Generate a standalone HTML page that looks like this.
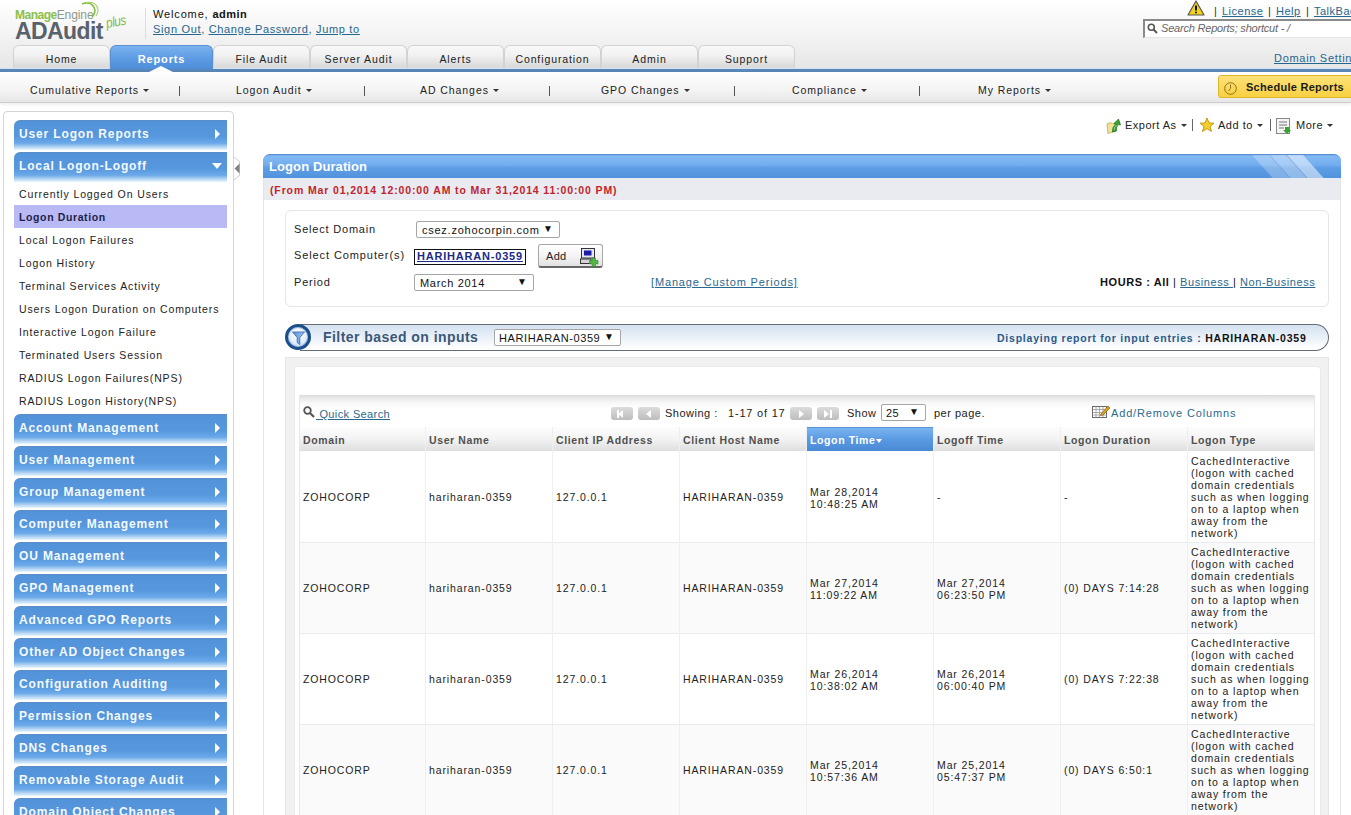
<!DOCTYPE html>
<html><head><meta charset="utf-8">
<style>
*{box-sizing:border-box;margin:0;padding:0}
html,body{width:1351px;height:815px;overflow:hidden;background:#fff;font-family:"Liberation Sans",sans-serif;color:#222;font-size:12px}
.a{position:absolute;white-space:nowrap}
#hdr{position:absolute;left:0;top:0;width:1351px;height:69px;background:linear-gradient(#ffffff 0%,#f6f6f6 40%,#e6e6e6 100%)}
.tab{position:absolute;top:45px;height:25px;border:1px solid #d2d2d2;border-bottom:none;border-radius:6px 6px 0 0;background:linear-gradient(#f9f9f9,#f1f1f1 40%,#dbdbdb 85%,#e0e0e0);text-align:center;font-size:10.5px;line-height:26px;color:#222;letter-spacing:0.9px}
.tab.on{background:linear-gradient(#7cb2f0,#5d9be4 50%,#4b8ad6);border-color:#5a8fd2;color:#fff;font-weight:bold;height:26px;font-size:11px;letter-spacing:0.85px}
#bline{position:absolute;left:0;top:69px;width:1351px;height:3px;background:#5a88b9;border-top:none}
#sub{position:absolute;left:0;top:72px;width:1351px;height:31px;background:linear-gradient(#fefefe,#f4f4f4 60%,#e6e6e6);border-bottom:1px solid #cdcdcd;box-shadow:0 1px 4px rgba(0,0,0,0.10)}
.sn{position:absolute;top:84px;font-size:10.5px;color:#222;letter-spacing:0.93px}
.sep{position:absolute;top:86px;width:1px;height:10px;background:#555}
.car{display:inline-block;width:0;height:0;border-left:3px solid transparent;border-right:3px solid transparent;border-top:3px solid #333;vertical-align:middle;margin-left:4px;margin-bottom:2px}
#side{position:absolute;left:3px;top:111px;width:231px;height:720px;border:1px solid #d6d6d6;border-radius:4px;background:#fff}
.bar{position:absolute;left:14px;width:213px;height:30px;border-radius:6px 0 0 0;background:linear-gradient(#5a8cc6 0px,#5393d9 2px,#5797dd 55%,#6aa8e8 77%,#eaf6fc 100%);color:#f4faff;font-weight:bold;font-size:12px;line-height:28px;padding-left:5px;letter-spacing:0.85px}
.bar i{position:absolute;right:7px;top:9px;width:0;height:0;border-top:5px solid transparent;border-bottom:5px solid transparent;border-left:5px solid #fff}
.bar i.dn{border-left:5px solid transparent;border-right:5px solid transparent;border-top:6px solid #fff;border-bottom:none;top:11px;right:5px}
.si{position:absolute;left:19px;font-size:10.5px;color:#222;letter-spacing:0.89px;margin-top:2px}
.tb{font-size:11px;color:#222;letter-spacing:0.5px;margin-top:1px}
.fl{font-size:11px;color:#222;letter-spacing:0.8px}
.sel{border:1px solid #a6a6a6;border-radius:2px;background:#fff}
.sel span{position:absolute;top:1px;font-size:11px;color:#111;white-space:nowrap;line-height:14px}
.sel b{position:absolute;right:6px;top:1px;font-size:10px;color:#111;font-weight:normal}
.pg{top:407px;width:22px;height:13px;border-radius:3px;background:linear-gradient(#dcdcdc,#bdbdbd)}
.pg i{position:absolute;top:3px;width:0;height:0;border-top:4px solid transparent;border-bottom:4px solid transparent;border-right:5px solid #fff}
.pg i.r{border-right:none;border-left:5px solid #fff}
.pg s{position:absolute;top:3px;width:2px;height:8px;background:#fff}
.tt{font-size:11px;color:#222;letter-spacing:0.5px}
.th{top:434px;font-size:10.5px;font-weight:bold;color:#505050;letter-spacing:0.62px}
.td{font-size:10.5px;color:#222;letter-spacing:0.88px;line-height:12px}
</style></head><body>
<div id="hdr"></div>
<!-- logo -->
<div class="a" style="left:15px;top:8px;font-size:12px;font-weight:bold;color:#8cc04a;letter-spacing:-0.5px">Manage<span style="font-weight:normal;color:#8f9a8c;letter-spacing:-0.1px">Engine</span></div>
<div class="a" style="left:78px;top:1px"><svg width="22" height="18" viewBox="0 0 22 18"><path d="M4 3 Q14 -1 17 9 Q17 13 14 16" fill="none" stroke="#8cc04a" stroke-width="1.6"/><path d="M8 1.5 Q19 0 20 9 Q20 12 18 15" fill="none" stroke="#a8d070" stroke-width="1.1"/></svg></div>
<div class="a" style="left:15px;top:18px;font-size:23px;font-weight:bold;color:#59626c;letter-spacing:-0.6px">ADAudit</div>
<div class="a" style="left:106px;top:15px;font-size:14px;font-style:italic;color:#7cbc48;letter-spacing:-0.6px;transform:rotate(-10deg) scaleX(0.85);transform-origin:0 50%">plus</div>
<div class="a" style="left:145px;top:8px;width:1px;height:31px;background:#ddd"></div>
<div class="a" style="left:153px;top:8px;font-size:11px;color:#111;letter-spacing:0.85px">Welcome, <b style="letter-spacing:0.5px">admin</b></div>
<div class="a" style="left:153px;top:23px;font-size:11px;color:#27668f;letter-spacing:0.67px"><u>Sign Out</u>, <u>Change Password</u>, <u>Jump to</u></div>

<div class="tab" style="left:13px;width:97px">Home</div>
<div class="tab on" style="left:110px;width:103px">Reports</div>
<div class="tab" style="left:213px;width:97px">File Audit</div>
<div class="tab" style="left:310px;width:97px">Server Audit</div>
<div class="tab" style="left:407px;width:97px">Alerts</div>
<div class="tab" style="left:504px;width:97px">Configuration</div>
<div class="tab" style="left:601px;width:97px">Admin</div>
<div class="tab" style="left:698px;width:97px">Support</div>

<!-- top right -->
<div class="a" style="left:1187px;top:0px"><svg width="18" height="16" viewBox="0 0 18 16"><path d="M9 1 L17 15 L1 15 Z" fill="#f3d21a" stroke="#555" stroke-width="1.2" stroke-linejoin="round"/><path d="M9 5.5V10.5" stroke="#111" stroke-width="2"/><circle cx="9" cy="12.6" r="1" fill="#111"/></svg></div>
<div class="a" style="left:1214px;top:5px;font-size:11px;color:#333">|</div>
<div class="a" style="left:1222px;top:5px;font-size:11px;color:#27668f;letter-spacing:0.5px"><u>License</u></div>
<div class="a" style="left:1268px;top:5px;font-size:11px;color:#333">|</div>
<div class="a" style="left:1276px;top:5px;font-size:11px;color:#27668f;letter-spacing:0.5px"><u>Help</u></div>
<div class="a" style="left:1306px;top:5px;font-size:11px;color:#333">|</div>
<div class="a" style="left:1314px;top:5px;font-size:11px;color:#27668f;letter-spacing:0.5px"><u>TalkBack</u></div>
<div class="a" style="left:1143px;top:19px;width:210px;height:19px;border:2px solid #8a8a8a;border-right:none;border-bottom:1px solid #e6e6e6;background:#fff"></div>
<div class="a" style="left:1147px;top:23px"><svg width="11" height="11" viewBox="0 0 11 11"><circle cx="4.3" cy="4.3" r="3" fill="none" stroke="#555" stroke-width="1.6"/><path d="M6.5 6.5L10 10" stroke="#555" stroke-width="2"/></svg></div>
<div class="a" style="left:1161px;top:22px;font-size:11px;font-style:italic;color:#666;letter-spacing:-0.2px">Search Reports; shortcut - /</div>
<div class="a" style="left:1274px;top:52px;font-size:11px;color:#27668f;letter-spacing:0.7px"><u>Domain Settings</u></div>

<div class="a" style="left:0;top:68px;width:110px;height:1px;background:#d2e2f2"></div><div class="a" style="left:213px;top:68px;width:1138px;height:1px;background:#d2e2f2"></div>
<div id="bline"></div>
<div class="a" style="left:149px;top:66px;width:0;height:0;border-left:12px solid transparent;border-right:12px solid transparent;border-bottom:6px solid #fff"></div>

<div id="sub"></div>
<div class="sn" style="left:30px">Cumulative Reports<span class="car"></span></div>
<div class="sep" style="left:179px"></div>
<div class="sn" style="left:236px">Logon Audit<span class="car"></span></div>
<div class="sep" style="left:364px"></div>
<div class="sn" style="left:420px">AD Changes<span class="car"></span></div>
<div class="sep" style="left:549px"></div>
<div class="sn" style="left:601px">GPO Changes<span class="car"></span></div>
<div class="sep" style="left:734px"></div>
<div class="sn" style="left:792px">Compliance<span class="car"></span></div>
<div class="sep" style="left:919px"></div>
<div class="sn" style="left:978px">My Reports<span class="car"></span></div>
<div class="a" style="left:1218px;top:75px;width:140px;height:23px;border:1px solid #e0b428;border-radius:3px;background:linear-gradient(#fde27a,#f8d040);"></div>
<div class="a" style="left:1224px;top:82px"><svg width="13" height="13" viewBox="0 0 13 13"><circle cx="6.5" cy="6.5" r="5.8" fill="none" stroke="#8a7020" stroke-width="1"/><path d="M6.5 2.5V6.5L4.5 9" fill="none" stroke="#8a7020" stroke-width="1"/></svg></div>
<div class="a" style="left:1246px;top:81px;font-size:11px;font-weight:bold;color:#1a1a1a;letter-spacing:0.28px">Schedule Reports</div>

<!-- sidebar -->
<div id="side"></div>
<div class="bar" style="top:120px">User Logon Reports<i></i></div>
<div class="bar" style="top:152px">Local Logon-Logoff<i class="dn"></i></div>
<div class="si" style="top:186px">Currently Logged On Users</div>
<div class="a" style="left:14px;top:205px;width:213px;height:23px;background:#b9b9f5"></div>
<div class="si" style="top:209px;font-weight:bold;color:#1c1f4a;letter-spacing:0.62px">Logon Duration</div>
<div class="si" style="top:232px">Local Logon Failures</div>
<div class="si" style="top:255px">Logon History</div>
<div class="si" style="top:278px">Terminal Services Activity</div>
<div class="si" style="top:301px">Users Logon Duration on Computers</div>
<div class="si" style="top:324px">Interactive Logon Failure</div>
<div class="si" style="top:347px">Terminated Users Session</div>
<div class="si" style="top:370px">RADIUS Logon Failures(NPS)</div>
<div class="si" style="top:393px">RADIUS Logon History(NPS)</div>
<div class="bar" style="top:414px">Account Management<i></i></div>
<div class="bar" style="top:446px">User Management<i></i></div>
<div class="bar" style="top:478px">Group Management<i></i></div>
<div class="bar" style="top:510px">Computer Management<i></i></div>
<div class="bar" style="top:542px">OU Management<i></i></div>
<div class="bar" style="top:574px">GPO Management<i></i></div>
<div class="bar" style="top:606px">Advanced GPO Reports<i></i></div>
<div class="bar" style="top:638px">Other AD Object Changes<i></i></div>
<div class="bar" style="top:670px">Configuration Auditing<i></i></div>
<div class="bar" style="top:702px">Permission Changes<i></i></div>
<div class="bar" style="top:734px">DNS Changes<i></i></div>
<div class="bar" style="top:766px">Removable Storage Audit<i></i></div>
<div class="bar" style="top:798px">Domain Object Changes<i></i></div>
<div class="a" style="left:232px;top:157px"><svg width="10" height="24" viewBox="0 0 10 24"><path d="M2 0 L7.5 4.5 L7.5 18.5 L2 23" fill="#fff" stroke="#cdcdcd" stroke-width="1"/><path d="M2.5 11.5 L7.5 6.5 L7.5 16.5 Z" fill="#828282"/></svg></div>


<!-- toolbar -->
<div class="a" style="left:1106px;top:118px"><svg width="16" height="16" viewBox="0 0 16 16"><path d="M1 6 L5 4.5 L6.5 6 L9 5 L9.5 13 L2 15.5 Z" fill="#efe49a" stroke="#c2b060" stroke-width="0.9"/><path d="M6.5 14 Q6 9 9.5 6.5 L8 5.5 L12.5 1 L14.5 7 L12.3 6.6 Q10 8.5 10.5 13 Z" fill="#3da030" stroke="#1d6e18" stroke-width="0.7"/><path d="M8 12 Q8 9 10.5 7" stroke="#a8e090" stroke-width="0.8" fill="none"/></svg></div>
<div class="tb a" style="left:1125px;top:118px">Export As<span class="car"></span></div>
<div class="a" style="left:1192px;top:119px;width:1px;height:12px;background:#666"></div>
<div class="a" style="left:1199px;top:117px"><svg width="16" height="16" viewBox="0 0 16 16"><path d="M8 1 L10 6 L15 6.2 L11 9.4 L12.5 14.5 L8 11.6 L3.5 14.5 L5 9.4 L1 6.2 L6 6 Z" fill="#f6d02a" stroke="#c89a10" stroke-width="1"/></svg></div>
<div class="tb a" style="left:1218px;top:118px">Add to<span class="car"></span></div>
<div class="a" style="left:1270px;top:119px;width:1px;height:12px;background:#666"></div>
<div class="a" style="left:1276px;top:118px"><svg width="16" height="16" viewBox="0 0 16 16"><rect x="0.5" y="0.5" width="13" height="15" fill="#f4f4f4" stroke="#888"/><path d="M3 4h8M3 7h8M3 10h5" stroke="#777"/><path d="M9 9h4v3h2l-4 4-4-4h2z" fill="#3aa030"/></svg></div>
<div class="tb a" style="left:1296px;top:118px">More<span class="car"></span></div>

<!-- panel -->
<div class="a" style="left:263px;top:154px;width:1078px;height:680px;border:1px solid #e2e4e6;border-radius:8px 8px 0 0;background:#fff"></div>
<div class="a" style="left:263px;top:154px;width:1078px;height:24px;border-radius:7px 7px 0 0;background:linear-gradient(#6ea6ea 0,#82b9f3 6%,#74aef0 42%,#5d9de4 56%,#5193dd 100%);border-top:1px solid #5a8ed4;overflow:hidden">
 <div style="position:absolute;left:989px;top:0;width:17px;height:24px;background:rgba(255,255,255,0.25);transform:skewX(42deg);transform-origin:0 0"></div>
 <div style="position:absolute;left:1006px;top:0;width:17px;height:24px;background:rgba(255,255,255,0.35);transform:skewX(42deg);transform-origin:0 0;border-left:1px solid rgba(40,80,160,0.25)"></div>
 <div style="position:absolute;left:1023px;top:0;width:17px;height:24px;background:rgba(255,255,255,0.5);transform:skewX(42deg);transform-origin:0 0;border-left:1px solid rgba(40,80,160,0.35)"></div>
</div>
<div class="a" style="left:269px;top:159px;font-size:13px;font-weight:bold;color:#fff;letter-spacing:0.1px">Logon Duration</div>
<div class="a" style="left:264px;top:178px;width:1076px;height:22px;background:#e9ebf1"></div>
<div class="a" style="left:270px;top:184px;font-size:10.5px;font-weight:bold;color:#c3242a;letter-spacing:0.87px">(From Mar 01,2014 12:00:00 AM to Mar 31,2014 11:00:00 PM)</div>

<!-- form -->
<div class="a" style="left:285px;top:210px;width:1044px;height:97px;border:1px solid #e6e6e6;border-radius:6px"></div>
<div class="fl a" style="left:294px;top:223px">Select Domain</div>
<div class="fl a" style="left:294px;top:249px;letter-spacing:0.9px">Select Computer(s)</div>
<div class="fl a" style="left:294px;top:276px">Period</div>
<div class="a sel" style="left:416px;top:221px;width:144px;height:17px"><span style="left:5px;letter-spacing:0.75px">csez.zohocorpin.com</span><b>&#9660;</b></div>
<div class="a" style="left:414px;top:249px;width:112px;height:16px;border:1px solid #111;background:#fff"></div>
<div class="a" style="left:417px;top:250px;font-size:11px;font-weight:bold;color:#1c2a8a;letter-spacing:0.8px"><u>HARIHARAN-0359</u></div>
<div class="a" style="left:538px;top:244px;width:65px;height:24px;border:1px solid #a8a8a8;border-bottom:2px solid #666;border-radius:3px;background:linear-gradient(#ffffff,#f4f4f4 50%,#e2e2e2)"></div>
<div class="a" style="left:546px;top:250px;font-size:11px;color:#222;letter-spacing:0.3px">Add</div>
<div class="a" style="left:580px;top:247px"><svg width="20" height="20" viewBox="0 0 20 20"><rect x="1.5" y="1.5" width="13" height="9.5" fill="#e6e6ee" stroke="#222" stroke-width="0.9"/><rect x="4" y="3.5" width="7.5" height="5" fill="#1c1ca8"/><rect x="0.5" y="12" width="10.5" height="4.5" fill="#d4d4d4" stroke="#222" stroke-width="0.9"/><path d="M12.2 11 h3.2 v2.6 h2.6 v3.2 h-2.6 v2.6 h-3.2 v-2.6 h-2.6 v-3.2 h2.6 z" fill="#52b848" stroke="#2f8a2a" stroke-width="0.7"/></svg></div>
<div class="a sel" style="left:414px;top:274px;width:120px;height:17px"><span style="left:5px;letter-spacing:0.69px">March 2014</span><b>&#9660;</b></div>
<div class="a" style="left:651px;top:276px;font-size:11px;color:#2a6890;letter-spacing:0.85px"><u>[Manage Custom Periods]</u></div>
<div class="a" style="left:1100px;top:276px;font-size:11px;color:#111;letter-spacing:0.57px"><b>HOURS : All</b> | <u style="color:#2a6890">Business </u> | <u style="color:#2a6890">Non-Business </u></div>

<!-- filter bar -->
<div class="a" style="left:300px;top:324px;width:1029px;height:27px;border:1px solid #646e78;border-left:none;border-radius:0 14px 14px 0;background:linear-gradient(#d3e1f0,#eaf1f8 50%,#fdfdfe 90%)"></div>
<div class="a" style="left:285px;top:324px;width:26px;height:26px;border-radius:50%;border:3px solid #1a4f8c;box-shadow:inset 0 0 0 1px #9fc0e4;background:radial-gradient(circle at 50% 30%,#ffffff,#e4eef9 55%,#b7d0ec)"></div>
<div class="a" style="left:292px;top:331px"><svg width="13" height="15" viewBox="0 0 13 15"><defs><linearGradient id="fg" x1="0" x2="1"><stop offset="0" stop-color="#5a90d8"/><stop offset="1" stop-color="#9cc4f0"/></linearGradient></defs><path d="M0.5 1 L12.5 1 L7.8 6.5 L7.8 13.5 L5.2 11.5 L5.2 6.5 Z" fill="url(#fg)" stroke="#3f72b8" stroke-width="0.9"/></svg></div>
<div class="a" style="left:323px;top:329px;font-size:14px;font-weight:bold;color:#3b5878;letter-spacing:0.45px">Filter based on inputs</div>
<div class="a sel" style="left:494px;top:329px;width:127px;height:17px"><span style="left:4px;letter-spacing:0.6px">HARIHARAN-0359</span><b>&#9660;</b></div>
<div class="a" style="left:997px;top:332px;font-size:10.5px;font-weight:bold;color:#2a5a88;letter-spacing:0.78px">Displaying report for input entries : <span style="color:#111">HARIHARAN-0359</span></div>

<!-- table container -->
<div class="a" style="left:285px;top:357px;width:1044px;height:470px;background:#f1f1f1;border:1px solid #e6e6e6"></div>
<div class="a" style="left:294px;top:366px;width:1027px;height:460px;background:#fff;border-radius:4px;border:1px solid #eaeaea"></div>
<div class="a" style="left:299px;top:395px;width:1016px;height:32px;background:linear-gradient(#d9d9d9 0,#e9e9e9 3px,#f8f8f8 8px,#ffffff 14px);border-left:1px solid #e8e8e8;border-right:1px solid #e8e8e8"></div>
<div class="a" style="left:303px;top:406px"><svg width="12" height="12" viewBox="0 0 12 12"><circle cx="4.5" cy="4.5" r="3.3" fill="none" stroke="#555" stroke-width="1.8"/><path d="M7 7 L11 11" stroke="#555" stroke-width="2.2"/></svg></div>
<div class="a" style="left:316px;top:408px;font-size:11px;color:#2a6890;letter-spacing:0.38px"><u>&nbsp;Quick Search</u></div>
<div class="pg a" style="left:611px"><i style="border-right-color:#fff;left:7px"></i><s style="left:6px"></s></div>
<div class="pg a" style="left:638px"><i style="left:8px"></i></div>
<div class="a tt" style="left:665px;top:407px">Showing :</div><div class="a tt" style="left:728px;top:407px;letter-spacing:0.8px">1-17 of 17</div>
<div class="pg a" style="left:790px"><i class="r" style="left:9px"></i></div>
<div class="pg a" style="left:817px"><i class="r" style="left:7px"></i><s style="left:13px"></s></div>
<div class="a tt" style="left:847px;top:407px">Show</div>
<div class="a sel" style="left:881px;top:404px;width:45px;height:17px"><span style="left:4px;letter-spacing:0.5px">25</span><b>&#9660;</b></div>
<div class="a tt" style="left:934px;top:407px">per page.</div>
<div class="a" style="left:1092px;top:404px"><svg width="19" height="15" viewBox="0 0 19 15"><rect x="0.5" y="2.5" width="14" height="11" fill="#fff" stroke="#666"/><path d="M0.5 5.5h14M4 2.5v11M7.5 2.5v11M11 2.5v11M0.5 8.5h14M0.5 11h14" stroke="#999" stroke-width="0.8"/><path d="M9 10 L16 2 L18 4 L11 11 L8.5 11.5Z" fill="#e6a020" stroke="#8a5a10" stroke-width="0.7"/></svg></div>
<div class="a" style="left:1111px;top:407px;font-size:11px;color:#2a6890;letter-spacing:0.85px">Add/Remove Columns</div>

<!-- header row -->
<div class="a" style="left:299px;top:427px;width:1016px;height:24px;background:linear-gradient(#fdfdfd,#f3f3f3 50%,#dedede)"></div>
<div class="a" style="left:806px;top:427px;width:127px;height:24px;background:linear-gradient(#7ab3f1,#5a9ae2 50%,#4a8ad6);border-top:1px solid #5b94d8"></div>
<div class="th a" style="left:303px">Domain</div>
<div class="th a" style="left:429px">User Name</div>
<div class="th a" style="left:556px">Client IP Address</div>
<div class="th a" style="left:683px">Client Host Name</div>
<div class="th a" style="left:810px;color:#fff">Logon Time<span style="display:inline-block;border-left:3px solid transparent;border-right:3px solid transparent;border-top:4px solid #fff;vertical-align:middle;margin-left:0px"></span></div>
<div class="th a" style="left:937px">Logoff Time</div>
<div class="th a" style="left:1064px">Logon Duration</div>
<div class="th a" style="left:1191px">Logon Type</div>
<!--ROWS-->
<div class="a" style="left:299px;top:452px;width:1016px;height:91px;background:#ffffff;border-bottom:1px solid #e8ecf0"></div>
<div class="td a" style="left:303px;top:491px">ZOHOCORP</div>
<div class="td a" style="left:429px;top:491px">hariharan-0359</div>
<div class="td a" style="left:556px;top:491px">127.0.0.1</div>
<div class="td a" style="left:683px;top:491px">HARIHARAN-0359</div>
<div class="td a" style="left:810px;top:486px">Mar 28,2014<br>10:48:25 AM</div>
<div class="td a" style="left:937px;top:491px">-</div>
<div class="td a" style="left:1064px;top:491px">-</div>
<div class="td a" style="left:1191px;top:455px">CachedInteractive<br>(logon with cached<br>domain credentials<br>such as when logging<br>on to a laptop when<br>away from the<br>network)</div>
<div class="a" style="left:299px;top:543px;width:1016px;height:91px;background:#fafafa;border-bottom:1px solid #e8ecf0"></div>
<div class="td a" style="left:303px;top:582px">ZOHOCORP</div>
<div class="td a" style="left:429px;top:582px">hariharan-0359</div>
<div class="td a" style="left:556px;top:582px">127.0.0.1</div>
<div class="td a" style="left:683px;top:582px">HARIHARAN-0359</div>
<div class="td a" style="left:810px;top:577px">Mar 27,2014<br>11:09:22 AM</div>
<div class="td a" style="left:937px;top:577px">Mar 27,2014<br>06:23:50 PM</div>
<div class="td a" style="left:1064px;top:582px">(0) DAYS 7:14:28</div>
<div class="td a" style="left:1191px;top:546px">CachedInteractive<br>(logon with cached<br>domain credentials<br>such as when logging<br>on to a laptop when<br>away from the<br>network)</div>
<div class="a" style="left:299px;top:634px;width:1016px;height:91px;background:#ffffff;border-bottom:1px solid #e8ecf0"></div>
<div class="td a" style="left:303px;top:673px">ZOHOCORP</div>
<div class="td a" style="left:429px;top:673px">hariharan-0359</div>
<div class="td a" style="left:556px;top:673px">127.0.0.1</div>
<div class="td a" style="left:683px;top:673px">HARIHARAN-0359</div>
<div class="td a" style="left:810px;top:668px">Mar 26,2014<br>10:38:02 AM</div>
<div class="td a" style="left:937px;top:668px">Mar 26,2014<br>06:00:40 PM</div>
<div class="td a" style="left:1064px;top:673px">(0) DAYS 7:22:38</div>
<div class="td a" style="left:1191px;top:637px">CachedInteractive<br>(logon with cached<br>domain credentials<br>such as when logging<br>on to a laptop when<br>away from the<br>network)</div>
<div class="a" style="left:299px;top:725px;width:1016px;height:91px;background:#fafafa;border-bottom:1px solid #e8ecf0"></div>
<div class="td a" style="left:303px;top:764px">ZOHOCORP</div>
<div class="td a" style="left:429px;top:764px">hariharan-0359</div>
<div class="td a" style="left:556px;top:764px">127.0.0.1</div>
<div class="td a" style="left:683px;top:764px">HARIHARAN-0359</div>
<div class="td a" style="left:810px;top:759px">Mar 25,2014<br>10:57:36 AM</div>
<div class="td a" style="left:937px;top:759px">Mar 25,2014<br>05:47:37 PM</div>
<div class="td a" style="left:1064px;top:764px">(0) DAYS 6:50:1</div>
<div class="td a" style="left:1191px;top:728px">CachedInteractive<br>(logon with cached<br>domain credentials<br>such as when logging<br>on to a laptop when<br>away from the<br>network)</div>
<div class="a" style="left:425px;top:427px;width:1px;height:400px;background:#edf0f3"></div>
<div class="a" style="left:552px;top:427px;width:1px;height:400px;background:#edf0f3"></div>
<div class="a" style="left:679px;top:427px;width:1px;height:400px;background:#edf0f3"></div>
<div class="a" style="left:806px;top:427px;width:1px;height:400px;background:#edf0f3"></div>
<div class="a" style="left:933px;top:427px;width:1px;height:400px;background:#edf0f3"></div>
<div class="a" style="left:1060px;top:427px;width:1px;height:400px;background:#edf0f3"></div>
<div class="a" style="left:1187px;top:427px;width:1px;height:400px;background:#edf0f3"></div>
<div class="a" style="left:299px;top:427px;width:1px;height:400px;background:#e6e9ec"></div>
<div class="a" style="left:1314px;top:427px;width:1px;height:400px;background:#e6e9ec"></div>
<!--/ROWS-->
</body></html>
